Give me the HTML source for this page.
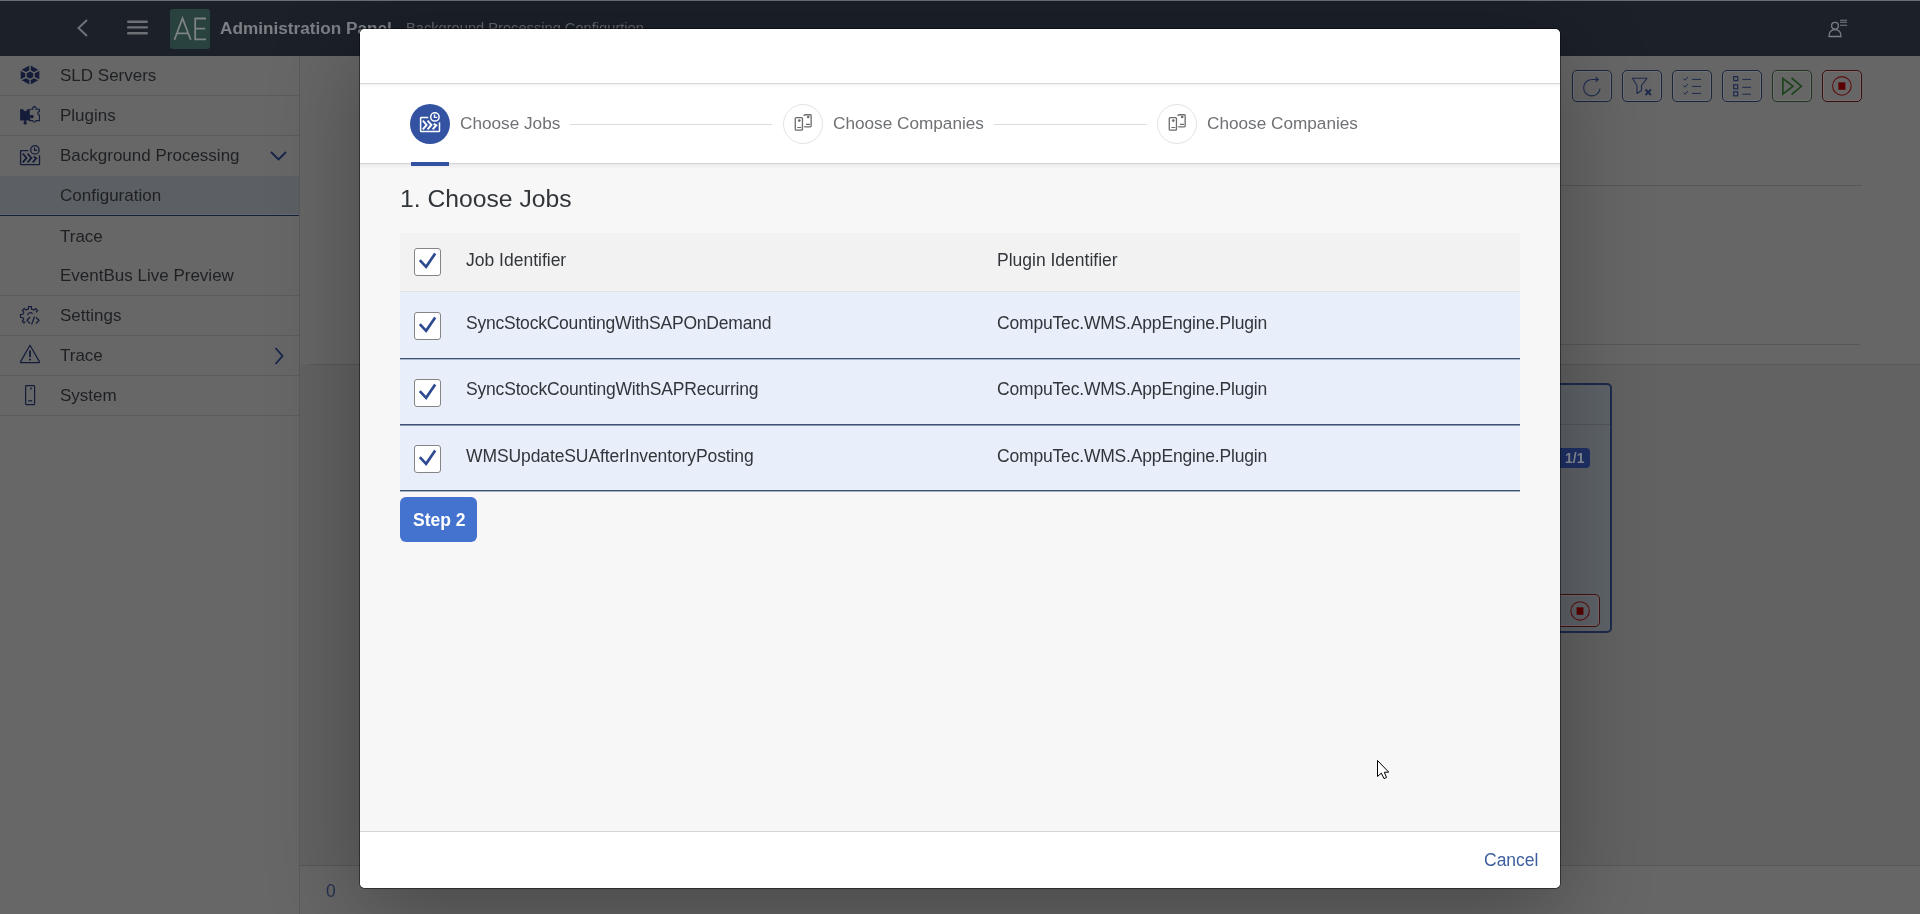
<!DOCTYPE html>
<html><head><meta charset="utf-8">
<style>
*{box-sizing:border-box;margin:0;padding:0}
html,body{width:1920px;height:914px;overflow:hidden}
body{position:relative;background:#626262;font-family:"Liberation Sans",sans-serif}
.a{position:absolute}
svg.a{overflow:visible}
.t{position:absolute;line-height:1;white-space:nowrap;will-change:transform}
</style></head><body>
<div class="a" style="left:0px;top:0px;width:1920px;height:914px;background:#626262"></div>
<div class="a" style="left:300px;top:56px;width:1620px;height:308px;background:#666666"></div>
<div class="a" style="left:300px;top:866px;width:1620px;height:48px;background:#666666"></div>
<div class="a" style="left:1572px;top:70px;width:40px;height:32px;border:1px solid #1c2636;border-radius:5px;box-shadow:inset 0 0 0 1px rgba(120,135,160,.35)"></div>
<div class="a" style="left:1622px;top:70px;width:40px;height:32px;border:1px solid #1c2636;border-radius:5px;box-shadow:inset 0 0 0 1px rgba(120,135,160,.35)"></div>
<div class="a" style="left:1672px;top:70px;width:40px;height:32px;border:1px solid #1c2636;border-radius:5px;box-shadow:inset 0 0 0 1px rgba(120,135,160,.35)"></div>
<div class="a" style="left:1722px;top:70px;width:40px;height:32px;border:1px solid #1c2636;border-radius:5px;box-shadow:inset 0 0 0 1px rgba(120,135,160,.35)"></div>
<div class="a" style="left:1772px;top:70px;width:40px;height:32px;border:1px solid #253025;border-radius:5px;box-shadow:inset 0 0 0 1px rgba(120,150,120,.35)"></div>
<div class="a" style="left:1822px;top:70px;width:40px;height:32px;border:1px solid #2e1313;border-radius:5px;box-shadow:inset 0 0 0 1px rgba(170,110,110,.4)"></div>
<svg class="a" style="left:1572px;top:70px;" width="40" height="32" viewBox="0 0 40 32"><path d="M19.5 9.5 A8.2 8.2 0 1 0 28 18.5" fill="none" stroke="#1c2a4e" stroke-width="1.1"/><path d="M19.5 9.5 H26 M23.5 7.2 L26.2 9.5 L23.5 11.8" fill="none" stroke="#1c2a4e" stroke-width="1.1"/></svg>
<svg class="a" style="left:1622px;top:70px;" width="40" height="32" viewBox="0 0 40 32"><path d="M10.5 8.3 H25 L19.5 15.5 V20.5 L15 23.5 V15.5 Z" fill="none" stroke="#1c2a4e" stroke-width="1.1" stroke-linejoin="round"/><path d="M23.5 19.5 L29 25 M29 19.5 L23.5 25" stroke="#1c2a4e" stroke-width="1.8"/></svg>
<svg class="a" style="left:1672px;top:70px;" width="40" height="32" viewBox="0 0 40 32"><path d="M11.5 8.6 L13 10.2 L16 7 M11.5 15.6 L13 17.2 L16 14 M11.5 22.6 L13 24.2 L16 21" fill="none" stroke="#1c2a4e" stroke-width="1"/><path d="M20 9.4 H29 M20 16.4 H29 M20 23.4 H29" stroke="#1c2a4e" stroke-width="1"/></svg>
<svg class="a" style="left:1722px;top:70px;" width="40" height="32" viewBox="0 0 40 32"><rect x="11.7" y="6.6" width="4" height="4" fill="none" stroke="#1c2a4e" stroke-width="1.2"/><rect x="11.7" y="14.8" width="4" height="4" fill="none" stroke="#1c2a4e" stroke-width="1.2"/><rect x="11.7" y="21.8" width="4" height="4" fill="none" stroke="#1c2a4e" stroke-width="1.2"/><path d="M20.3 9.4 H29 M20.3 17.3 H29 M20.3 24.2 H29" stroke="#1c2a4e" stroke-width="1"/></svg>
<svg class="a" style="left:1772px;top:70px;" width="40" height="32" viewBox="0 0 40 32"><path d="M10.9 8.5 V24 L21 16.3 Z" fill="none" stroke="#1e451e" stroke-width="1.7" stroke-linejoin="miter"/><path d="M19.6 8 L29.4 16.3 L19.6 24.5" fill="none" stroke="#1e451e" stroke-width="1.7"/></svg>
<svg class="a" style="left:1822px;top:70px;" width="40" height="32" viewBox="0 0 40 32"><circle cx="19.9" cy="15.9" r="9.3" fill="none" stroke="#5e1010" stroke-width="1.1"/><rect x="16.4" y="12.4" width="7" height="7.4" fill="#5a0000"/></svg>
<div class="a" style="left:1560px;top:185px;width:302px;height:1px;background:#575757"></div>
<div class="a" style="left:1560px;top:344px;width:300px;height:1px;background:#575757"></div>
<div class="a" style="left:310px;top:364px;width:1610px;height:1px;background:#585858"></div>
<div class="a" style="left:300px;top:865px;width:1620px;height:1px;background:#585858"></div>
<div class="a" style="left:1500px;top:383px;width:112px;height:250px;border:2px solid #1c2a4c;border-radius:5px;background:#5e6369"></div>
<div class="a" style="left:1500px;top:424px;width:110px;height:1px;background:#545659"></div>
<div class="a" style="left:1540px;top:448px;width:50px;height:20px;background:#1f3166;border-radius:4px"></div>
<div class="t" style="left:1565px;top:451.00px;font-size:14px;color:#8b909a;font-weight:bold;">1/1</div>
<div class="a" style="left:1540px;top:594px;width:60px;height:33px;border:1px solid #3a1212;border-radius:5px;box-shadow:inset 0 0 0 1px rgba(170,110,110,.35)"></div>
<svg class="a" style="left:1540px;top:594px;" width="60" height="33" viewBox="0 0 60 33"><circle cx="40.1" cy="16.9" r="9.2" fill="none" stroke="#5e1010" stroke-width="1.1"/><rect x="36.6" y="13.3" width="6.8" height="7.5" fill="#5a0000"/></svg>
<div class="t" style="left:326px;top:883.00px;font-size:17.5px;color:#24324f;font-weight:normal;">0</div>
<div class="a" style="left:0px;top:0px;width:1920px;height:56px;background:#1b2029;border-top:1px solid #6a6d71"></div>
<svg class="a" style="left:73px;top:17px;" width="20" height="22" viewBox="0 0 20 22"><path d="M14 3 L5.5 11 L14 19" fill="none" stroke="#6f7378" stroke-width="2"/></svg>
<svg class="a" style="left:127px;top:19px;" width="22" height="18" viewBox="0 0 22 18"><rect x="0" y="1.5" width="21" height="2.4" rx="1.2" fill="#6d7075"/><rect x="0" y="7.2" width="21" height="2.4" rx="1.2" fill="#6d7075"/><rect x="0" y="13" width="21" height="2.4" rx="1.2" fill="#6d7075"/></svg>
<div class="a" style="left:170px;top:9px;width:40px;height:40px;background:#29423f;border-radius:3px"></div>
<svg class="a" style="left:170px;top:9px;" width="40" height="40" viewBox="0 0 40 40"><path d="M4.5 30.7 L12.5 9.3 L20.7 30.7 M7.3 24.4 H17.9 M36 9.5 H25.2 V30.3 H36 M25.2 19.6 H35.2" fill="none" stroke="#7d8283" stroke-width="1.8"/></svg>
<div class="t" style="left:220px;top:20.00px;font-size:17.2px;color:#7c8085;font-weight:bold;">Administration Panel</div>
<div class="t" style="left:405.5px;top:21.00px;font-size:14.66px;color:#63676c;font-weight:normal;">Background Processing Configurtion</div>
<svg class="a" style="left:1826px;top:16px;" width="24" height="24" viewBox="0 0 24 24"><circle cx="9" cy="9.8" r="3.4" fill="none" stroke="#7b7f85" stroke-width="1.3"/><path d="M3 20.5 C3 15.5 5.5 13.6 9 13.6 C12.5 13.6 15 15.5 15 20.5 Z" fill="none" stroke="#7b7f85" stroke-width="1.3"/><path d="M14 4.3 H21 M14 6.3 H21 M14 9.3 H21" stroke="#7b7f85" stroke-width="1.1"/></svg>
<div class="a" style="left:0px;top:56px;width:300px;height:858px;background:#676767;border-right:1px solid #5a5a5a"></div>
<div class="a" style="left:0px;top:176px;width:299px;height:39px;background:#5c5f63"></div>
<div class="a" style="left:0px;top:214px;width:299px;height:1px;background:#5f6a78"></div>
<div class="a" style="left:0px;top:215px;width:299px;height:1px;background:#1a2230"></div>
<div class="t" style="left:59.75px;top:67.00px;font-size:17px;color:#1e2023;font-weight:normal;">SLD Servers</div>
<div class="a" style="left:0px;top:95px;width:299px;height:1px;background:#5c5c5c"></div>
<div class="t" style="left:59.75px;top:107.00px;font-size:17px;color:#1e2023;font-weight:normal;">Plugins</div>
<div class="a" style="left:0px;top:135px;width:299px;height:1px;background:#5c5c5c"></div>
<div class="t" style="left:59.75px;top:147.00px;font-size:17px;color:#1e2023;font-weight:normal;">Background Processing</div>
<div class="t" style="left:59.75px;top:187.00px;font-size:17px;color:#1e2023;font-weight:normal;">Configuration</div>
<div class="t" style="left:59.75px;top:228.00px;font-size:17px;color:#1e2023;font-weight:normal;">Trace</div>
<div class="t" style="left:59.75px;top:267.00px;font-size:17px;color:#1e2023;font-weight:normal;">EventBus Live Preview</div>
<div class="a" style="left:0px;top:295px;width:299px;height:1px;background:#5c5c5c"></div>
<div class="t" style="left:59.75px;top:307.00px;font-size:17px;color:#1e2023;font-weight:normal;">Settings</div>
<div class="a" style="left:0px;top:335px;width:299px;height:1px;background:#5c5c5c"></div>
<div class="t" style="left:59.75px;top:347.00px;font-size:17px;color:#1e2023;font-weight:normal;">Trace</div>
<div class="a" style="left:0px;top:375px;width:299px;height:1px;background:#5c5c5c"></div>
<div class="t" style="left:59.75px;top:387.00px;font-size:17px;color:#1e2023;font-weight:normal;">System</div>
<div class="a" style="left:0px;top:415px;width:299px;height:1px;background:#5c5c5c"></div>
<svg class="a" style="left:20px;top:65px;" width="20" height="20" viewBox="0 0 20 20"><path d="M10 0.2 L18.6 5.1 Q19.3 5.5 19.3 6.3 V13.7 Q19.3 14.5 18.6 14.9 L10 19.8 L1.4 14.9 Q0.7 14.5 0.7 13.7 V6.3 Q0.7 5.5 1.4 5.1 Z" fill="#141c3a"/><path d="M10 5.6 L14 7.9 L14 12.4 L10 14.7 L6 12.4 L6 7.9 Z M10 0 V5.6 M14 7.9 L19.5 4.8 M14 12.4 L19.5 15.2 M10 14.7 V20 M6 12.4 L0.5 15.2 M6 7.9 L0.5 4.8" fill="none" stroke="#676767" stroke-width="1.5"/></svg>
<svg class="a" style="left:20px;top:105px;" width="20" height="20" viewBox="0 0 20 20"><path d="M0.1 4.3 H3.3 A1.9 1.9 0 0 0 7.1 4.3 H9.8 V15.6 H0.1 Z" fill="#141c3a"/><circle cx="5.2" cy="17.9" r="1.7" fill="#141c3a"/><rect x="4.4" y="15" width="1.6" height="2" fill="#141c3a"/><circle cx="11.9" cy="11.6" r="1.8" fill="#141c3a"/><path d="M9.8 4.3 H12.8 V3.9 A1.7 1.7 0 1 1 16 3.9 V4.3 H19.4 V6.6 A1.7 1.7 0 0 0 19.4 10 V15.6 H16 A1.6 1.6 0 1 1 12.8 15.6 H9.8 V9.8" fill="none" stroke="#141c3a" stroke-width="1.1"/></svg>
<svg class="a" style="left:20px;top:145px;" width="20" height="20" viewBox="0 0 20 20"><path d="M8.3 5.6 H1.2 Q0.6 5.6 0.6 6.2 V19 Q0.6 19.6 1.2 19.6 H18.9 Q19.5 19.6 19.5 19 V10.3" fill="none" stroke="#141c3a" stroke-width="1.3"/><circle cx="14.9" cy="4.9" r="4.2" fill="none" stroke="#141c3a" stroke-width="1.3"/><path d="M14.5 2.4 V5.3 H17.2" fill="none" stroke="#141c3a" stroke-width="1.17"/><path d="M2.8 8.6 L6.6 12.9 L2.8 17.4 M7.6 8.6 L11.4 12.9 L7.6 17.4 M13.6 11.8 L16.3 13.2 L12.7 17.4" fill="none" stroke="#141c3a" stroke-width="1.69"/></svg>
<svg class="a" style="left:270px;top:151px;" width="18" height="10" viewBox="0 0 18 10"><path d="M1 1 L8.5 8.5 L16 1" fill="none" stroke="#17244a" stroke-width="1.8"/></svg>
<svg class="a" style="left:19px;top:304px;" width="22" height="22" viewBox="0 0 22 22"><path d="M6.2 17.5 L5 19 L3.3 17.3 L4.6 15.6 A7 7 0 0 1 3.9 13.5 L1.5 13.3 V10.6 L3.9 10.3 A7 7 0 0 1 4.8 8.2 L3.3 6.5 L5.2 4.6 L7 6 A7 7 0 0 1 9.3 5.1 L9.6 2.6 H12.3 L12.6 5.1 A7 7 0 0 1 14.8 6 L16.6 4.6 L18.5 6.5 L17 8.3" fill="none" stroke="#141c3a" stroke-width="1.2"/><path d="M8.5 11 A3 3 0 0 1 13.6 9.6" fill="none" stroke="#141c3a" stroke-width="1.2"/><path d="M11 13 L8 16.3 L11 19.5 M15.5 12.5 L12.6 20.5 M17 13.5 L20 16.3 L17 19.5" fill="none" stroke="#141c3a" stroke-width="1.2"/></svg>
<svg class="a" style="left:19px;top:344px;" width="22" height="20" viewBox="0 0 22 20"><path d="M11 1.2 L20.4 17.6 Q20.9 18.7 19.6 18.7 H2.4 Q1.1 18.7 1.6 17.6 Z" fill="none" stroke="#141c3a" stroke-width="1.2" stroke-linejoin="round"/><path d="M11 6.5 V13" stroke="#141c3a" stroke-width="1.8"/><rect x="10.1" y="14.6" width="1.8" height="1.8" fill="#141c3a"/></svg>
<svg class="a" style="left:274px;top:347px;" width="10" height="18" viewBox="0 0 10 18"><path d="M1.5 1 L8.5 9 L1.5 17" fill="none" stroke="#17244a" stroke-width="1.8"/></svg>
<svg class="a" style="left:24px;top:384px;" width="12" height="22" viewBox="0 0 12 22"><rect x="1.6" y="1.6" width="9" height="19" rx="0.8" fill="none" stroke="#141c3a" stroke-width="1.2"/><rect x="6.3" y="3.6" width="1.5" height="1.8" fill="#141c3a"/><path d="M4.2 16.8 H8.2" stroke="#141c3a" stroke-width="1.2"/></svg>
<div class="a" style="left:360px;top:29px;width:1200px;height:859px;border-radius:5px;box-shadow:0 0 0 1px rgba(0,0,0,.45),0 24px 90px rgba(0,0,0,.3)"></div>
<div class="a" style="left:360px;top:29px;width:1200px;height:859px;border-radius:5px;overflow:hidden;background:#f7f7f7">
<div class="a" style="left:0px;top:0px;width:1200px;height:54px;background:#fff"></div>
<div class="a" style="left:0px;top:55px;width:1200px;height:79px;background:#fff"></div>
<div class="a" style="left:0px;top:54px;width:1200px;height:1px;background:#d6d6d6"></div>
<div class="a" style="left:0px;top:55px;width:1200px;height:4px;background:linear-gradient(rgba(0,0,0,.045),rgba(0,0,0,0))"></div>
<div class="a" style="left:0px;top:134px;width:1200px;height:1px;background:#d5d5d5"></div>
<div class="a" style="left:0px;top:135px;width:1200px;height:5px;background:linear-gradient(rgba(0,0,0,.055),rgba(0,0,0,0))"></div>
<div class="a" style="left:50px;top:75px;width:40px;height:40px;background:#3353a2;border-radius:50%"></div>
<svg class="a" style="left:60px;top:83px;" width="20" height="20" viewBox="0 0 20 20"><path d="M8.3 5.6 H1.2 Q0.6 5.6 0.6 6.2 V19 Q0.6 19.6 1.2 19.6 H18.9 Q19.5 19.6 19.5 19 V10.3" fill="none" stroke="#ffffff" stroke-width="1.5"/><circle cx="14.9" cy="4.9" r="4.2" fill="none" stroke="#ffffff" stroke-width="1.5"/><path d="M14.5 2.4 V5.3 H17.2" fill="none" stroke="#ffffff" stroke-width="1.35"/><path d="M2.8 8.6 L6.6 12.9 L2.8 17.4 M7.6 8.6 L11.4 12.9 L7.6 17.4 M13.6 11.8 L16.3 13.2 L12.7 17.4" fill="none" stroke="#ffffff" stroke-width="1.95"/></svg>
<div class="a" style="left:51px;top:133px;width:38px;height:4px;background:#3353a2"></div>
<div class="t" style="left:99.60000000000002px;top:86.00px;font-size:17.2px;color:#6f7174;font-weight:normal;">Choose Jobs</div>
<div class="a" style="left:210px;top:95px;width:202px;height:1px;background:#dcdcdc"></div>
<div class="a" style="left:423px;top:75px;width:40px;height:40px;border:1px solid #e3e3e3;border-radius:50%;background:#fff"></div>
<svg class="a" style="left:423px;top:75px;" width="40" height="40" viewBox="0 0 40 40"><rect x="12.25" y="13.55" width="7.2" height="12.6" rx="1" fill="none" stroke="#6b6b6b" stroke-width="1.3"/><circle cx="16.3" cy="16.6" r="1.3" fill="#6b6b6b"/><path d="M14.3 23.5 H18.3" stroke="#6b6b6b" stroke-width="1.1"/><path d="M20.9 12 Q21 10.75 22.2 10.75 H27.4 Q28.15 10.75 28.15 11.6 V22.1 Q28.15 22.9 27.4 22.9 H22.3 Q21.3 22.9 21.2 22.3" fill="none" stroke="#6b6b6b" stroke-width="1.3"/><circle cx="25.2" cy="13" r="1.3" fill="#6b6b6b"/><path d="M23 20.4 H27" stroke="#6b6b6b" stroke-width="1.1"/></svg>
<div class="t" style="left:472.75px;top:86.00px;font-size:17.2px;color:#6f7174;font-weight:normal;">Choose Companies</div>
<div class="a" style="left:634px;top:95px;width:153px;height:1px;background:#dcdcdc"></div>
<div class="a" style="left:797px;top:75px;width:40px;height:40px;border:1px solid #e3e3e3;border-radius:50%;background:#fff"></div>
<svg class="a" style="left:797px;top:75px;" width="40" height="40" viewBox="0 0 40 40"><rect x="12.25" y="13.55" width="7.2" height="12.6" rx="1" fill="none" stroke="#6b6b6b" stroke-width="1.3"/><circle cx="16.3" cy="16.6" r="1.3" fill="#6b6b6b"/><path d="M14.3 23.5 H18.3" stroke="#6b6b6b" stroke-width="1.1"/><path d="M20.9 12 Q21 10.75 22.2 10.75 H27.4 Q28.15 10.75 28.15 11.6 V22.1 Q28.15 22.9 27.4 22.9 H22.3 Q21.3 22.9 21.2 22.3" fill="none" stroke="#6b6b6b" stroke-width="1.3"/><circle cx="25.2" cy="13" r="1.3" fill="#6b6b6b"/><path d="M23 20.4 H27" stroke="#6b6b6b" stroke-width="1.1"/></svg>
<div class="t" style="left:846.5px;top:86.00px;font-size:17.2px;color:#6f7174;font-weight:normal;">Choose Companies</div>
<div class="t" style="left:40.30000000000001px;top:158.00px;font-size:24.7px;color:#32363a;font-weight:normal;">1. Choose Jobs</div>
<div class="a" style="left:40px;top:204px;width:1120px;height:58px;background:#f2f2f2"></div>
<div class="a" style="left:40px;top:262px;width:1120px;height:1px;background:#e0e0e0"></div>
<div class="a" style="left:54px;top:219px;width:27px;height:28px;background:#fff;border:1px solid #858585;border-radius:3px"></div>
<svg class="a" style="left:54px;top:219px;" width="27" height="28" viewBox="0 0 27 28"><path d="M5.8 12.1 L12.1 18.8 L21.2 5.5" fill="none" stroke="#2e4b92" stroke-width="2.7"/></svg>
<div class="t" style="left:106px;top:223.00px;font-size:17.5px;color:#32363a;font-weight:normal;">Job Identifier</div>
<div class="t" style="left:636.5px;top:223.00px;font-size:17.5px;color:#32363a;font-weight:normal;">Plugin Identifier</div>
<div class="a" style="left:40px;top:263px;width:1120px;height:200px;background:#e8eefa"></div>
<div class="a" style="left:40px;top:329px;width:1120px;height:1px;background:#3d5175"></div>
<div class="a" style="left:40px;top:330px;width:1120px;height:1px;background:rgba(61,81,117,0.35)"></div>
<div class="a" style="left:40px;top:395px;width:1120px;height:1px;background:#3d5175"></div>
<div class="a" style="left:40px;top:396px;width:1120px;height:1px;background:rgba(61,81,117,0.55)"></div>
<div class="a" style="left:40px;top:461px;width:1120px;height:1px;background:#3d5175"></div>
<div class="a" style="left:40px;top:462px;width:1120px;height:1px;background:rgba(61,81,117,0.4)"></div>
<div class="a" style="left:54px;top:283px;width:27px;height:28px;background:#fff;border:1px solid #858585;border-radius:3px"></div>
<svg class="a" style="left:54px;top:283px;" width="27" height="28" viewBox="0 0 27 28"><path d="M5.8 12.1 L12.1 18.8 L21.2 5.5" fill="none" stroke="#2e4b92" stroke-width="2.7"/></svg>
<div class="t" style="left:105.5px;top:286.00px;font-size:17.5px;color:#32363a;font-weight:normal;letter-spacing:-0.22px">SyncStockCountingWithSAPOnDemand</div>
<div class="t" style="left:636.5px;top:286.00px;font-size:17.5px;color:#32363a;font-weight:normal;letter-spacing:-0.18px">CompuTec.WMS.AppEngine.Plugin</div>
<div class="a" style="left:54px;top:350px;width:27px;height:28px;background:#fff;border:1px solid #858585;border-radius:3px"></div>
<svg class="a" style="left:54px;top:350px;" width="27" height="28" viewBox="0 0 27 28"><path d="M5.8 12.1 L12.1 18.8 L21.2 5.5" fill="none" stroke="#2e4b92" stroke-width="2.7"/></svg>
<div class="t" style="left:105.5px;top:352.00px;font-size:17.5px;color:#32363a;font-weight:normal;letter-spacing:-0.19px">SyncStockCountingWithSAPRecurring</div>
<div class="t" style="left:636.5px;top:352.00px;font-size:17.5px;color:#32363a;font-weight:normal;letter-spacing:-0.18px">CompuTec.WMS.AppEngine.Plugin</div>
<div class="a" style="left:54px;top:416px;width:27px;height:28px;background:#fff;border:1px solid #858585;border-radius:3px"></div>
<svg class="a" style="left:54px;top:416px;" width="27" height="28" viewBox="0 0 27 28"><path d="M5.8 12.1 L12.1 18.8 L21.2 5.5" fill="none" stroke="#2e4b92" stroke-width="2.7"/></svg>
<div class="t" style="left:105.5px;top:419.00px;font-size:17.5px;color:#32363a;font-weight:normal;letter-spacing:-0.1px">WMSUpdateSUAfterInventoryPosting</div>
<div class="t" style="left:636.5px;top:419.00px;font-size:17.5px;color:#32363a;font-weight:normal;letter-spacing:-0.18px">CompuTec.WMS.AppEngine.Plugin</div>
<div class="a" style="left:40px;top:468px;width:77px;height:45px;background:#4472cf;border-radius:6px"></div>
<div class="t" style="left:52.60000000000002px;top:483.00px;font-size:17.5px;color:#ffffff;font-weight:bold;">Step 2</div>
<div class="a" style="left:0px;top:802px;width:1200px;height:1px;background:#d5d5d5"></div>
<div class="a" style="left:0px;top:803px;width:1200px;height:56px;background:#fff"></div>
<div class="t" style="left:1123.7px;top:823.00px;font-size:17.5px;color:#3d5f9e;font-weight:normal;">Cancel</div>
</div>
<svg class="a" style="left:1376px;top:759px;" width="16" height="22" viewBox="1376 759 16 22"><path d="M1377.5 760.5 L1377.5 776.5 L1381.3 773.1 L1384 778.6 L1386.5 777.5 L1384.3 772.3 L1388.7 772.1 Z" fill="#fff" stroke="#000" stroke-width="1" stroke-linejoin="round"/></svg>
</body></html>
